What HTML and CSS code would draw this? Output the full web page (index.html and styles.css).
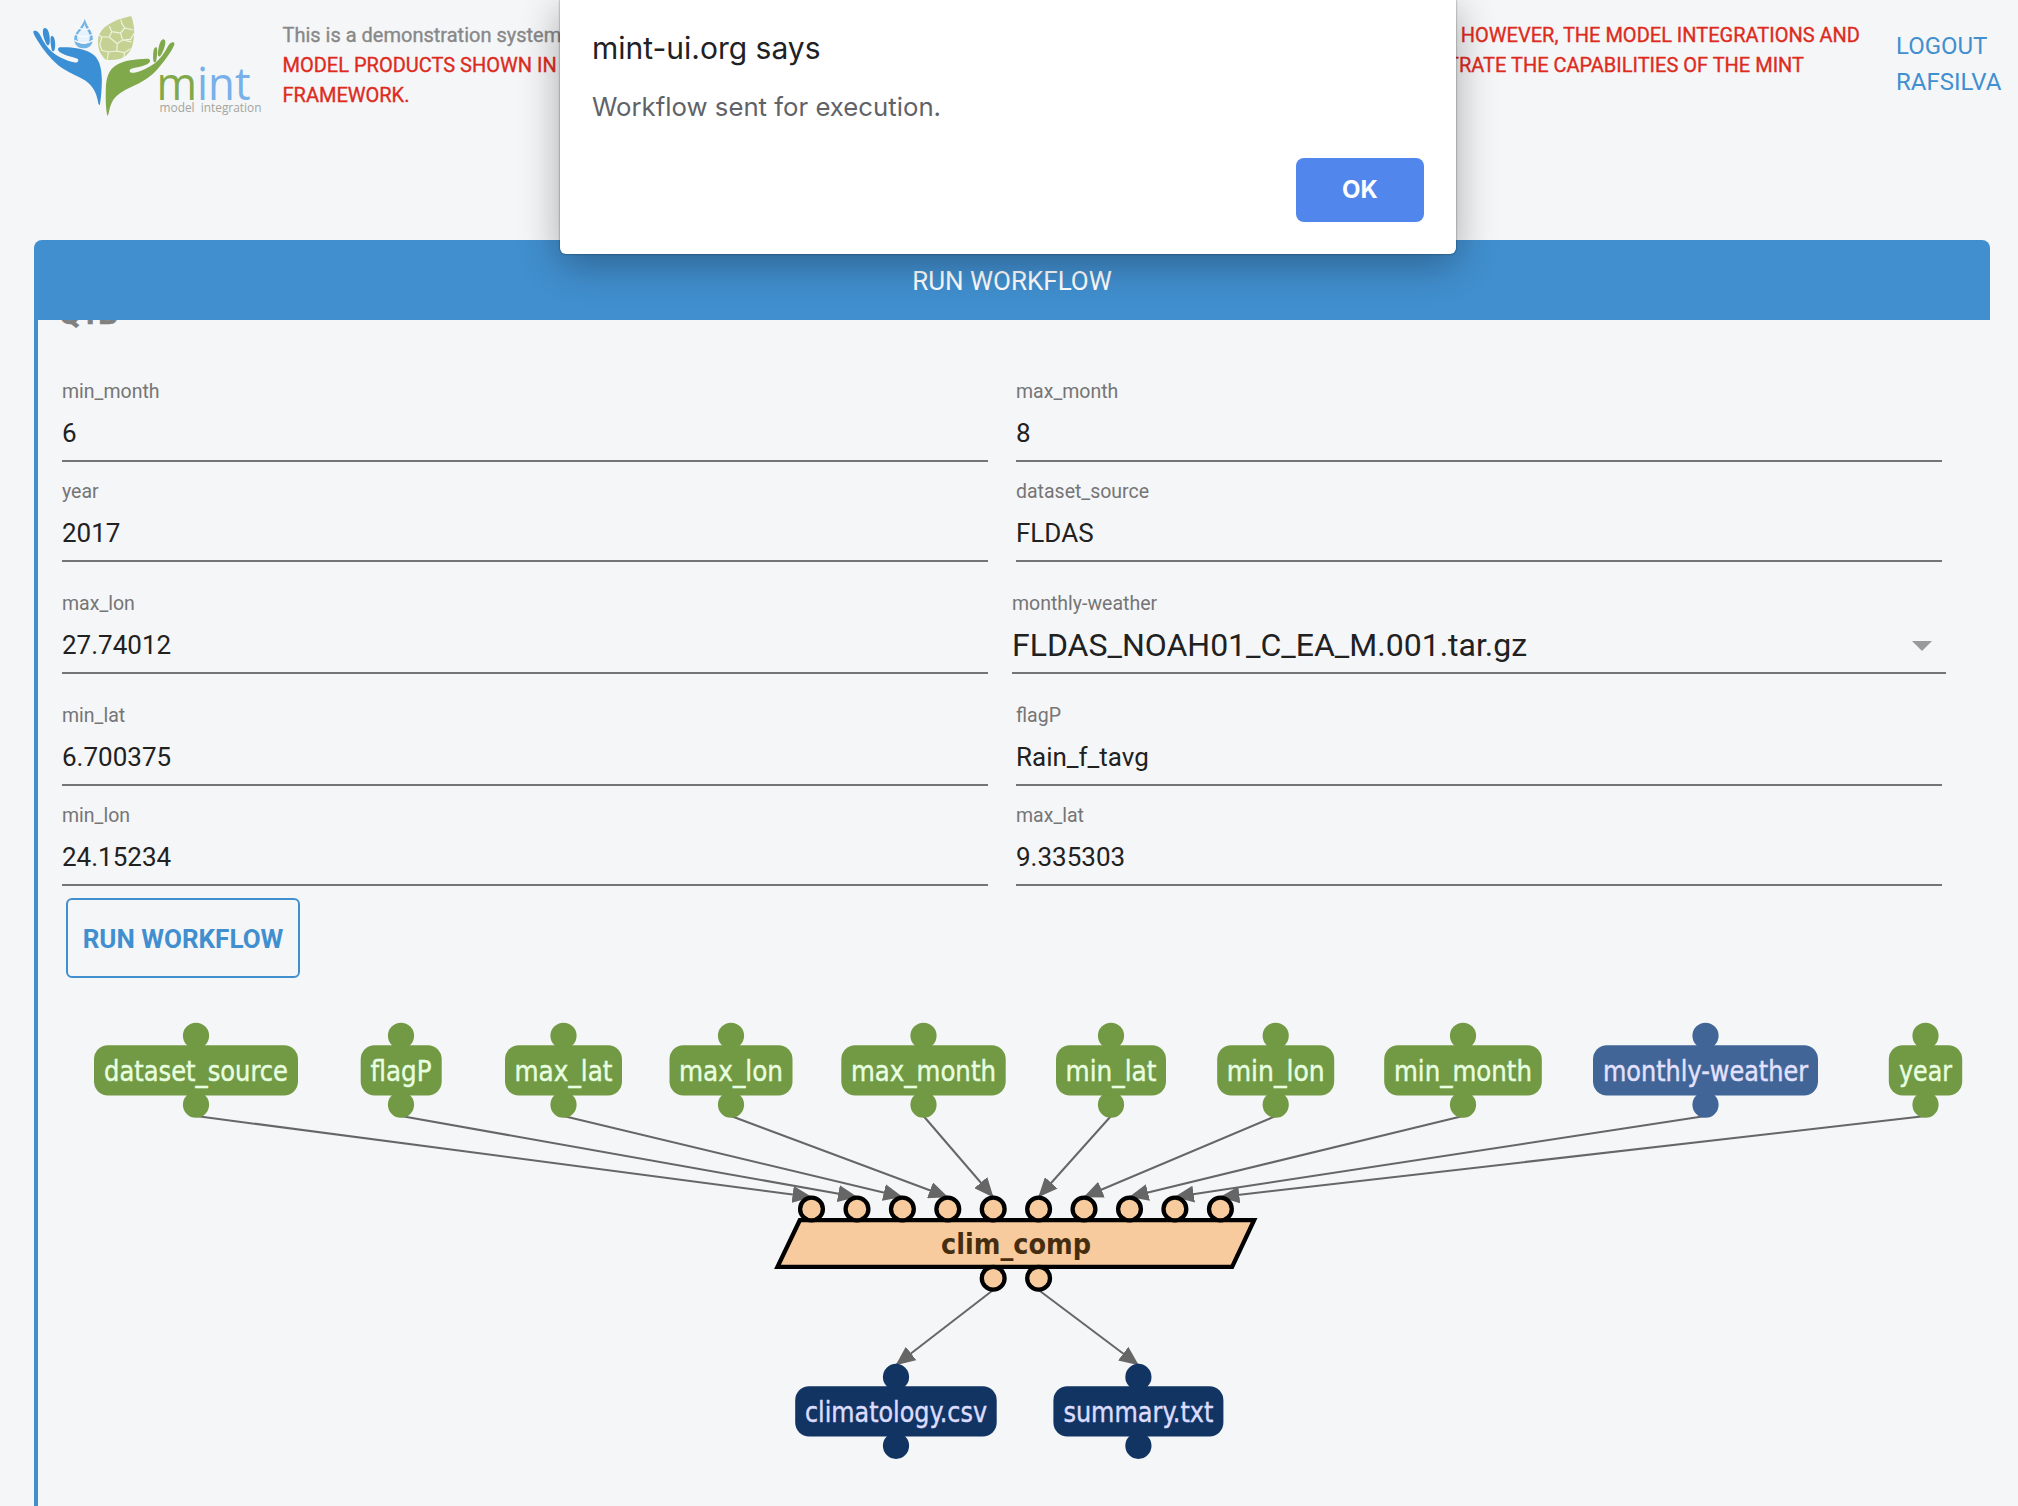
FILE: index.html
```html
<!DOCTYPE html>
<html lang="en">
<head>
<meta charset="utf-8">
<title>MINT</title>
<link rel="stylesheet" href="styles.css">
</head>
<body>
<header class="top">
  <svg class="logo" width="240" height="120" viewBox="0 0 240 120">
    <g transform="translate(2.5 0) scale(.33333)">
      <g fill="#3b8fd4">
        <path d="M9 93C20 89 26 99 30 107C39 127 52 144 66 157C86 173 112 184 130 187C142 190 147 181 141 176C120 170 95 164 85 154C80 146 84 141 92 142C124 141 156 146 180 158C206 172 213 200 214 238C214 270 211 300 208 315C204 316 203 309 201 298C194 263 172 243 145 231C106 214 79 197 56 169C36 146 20 121 11 104Q7 97 9 93Z"/>
        <path d="M41 84C53 82 58 102 58 123C58 132 54 139 50 135C42 125 31 91 41 84Z"/>
        <path d="M62 109C70 105 74 119 74 135C74 150 70 157 65 153C61 145 58 113 62 109Z"/>
      </g>
      <g fill="#80a94c">
        <path d="M430 127C421 124 415 133 411 141C402 160 388 176 375 188C355 203 329 215 311 218C298 220 292 211 303 206C322 201 343 199 355 189C362 182 359 175 348 176C318 177 278 181 258 195C233 210 227 235 226 268C225 300 226 330 231 348C236 342 235 330 241 315C250 289 270 277 296 264C335 246 361 232 384 204C406 178 422 156 431 136Q433 130 430 127Z"/>
        <path d="M400 118C388 118 384 142 382 160C382 170 386 173 391 166C400 152 411 122 400 118Z"/>
        <path d="M378 142C370 138 367 156 368 176C369 190 375 190 377 182C380 168 382 146 378 142Z"/>
      </g>
      <path d="M163 56C169 81 187 92 187 117C187 135 176 145 160 145C143 145 131 134 131 117C131 96 156 82 163 56Z" fill="#74b4e4"/>
      <path d="M162 73C168 91 178 98 178 112C178 125 171 132 160 132C147 132 140 124 140 112C140 98 157 90 162 73Z" fill="#e6f3fc"/>
      <path d="M132 75Q162 102 194 76M133 102Q160 118 188 102M132 121Q160 137 188 121" fill="none" stroke="#f8fafc" stroke-width="4"/>
      <path d="M302 48C312 75 314 100 307 132C301 160 280 179 247 180H227C207 163 200 142 203 113C210 82 245 60 302 48Z" fill="#c3d293"/>
      <path d="M236 78L244 95L236 111L214 111L204 104M244 95L270 99L283 84L274 71L271 58M283 84L308 90M270 99L276 120L304 126M276 120L260 131L236 111M260 131L259 153L282 158L300 146M214 111L208 134L214 151L234 156L259 153M234 156L230 180M282 158L280 174M276 120L300 118L311 100" fill="none" stroke="#eef3df" stroke-width="3.500"/>
    </g>
    <text class="lg-name" x="128.500" y="99.700" textLength="94" lengthAdjust="spacingAndGlyphs"><tspan fill="#80a94c">m</tspan><tspan fill="#78b0ea">int</tspan></text>
    <text class="lg-sub" x="131.500" y="111.800" textLength="102" lengthAdjust="spacingAndGlyphs">model&#160; integration</text>
  </svg>
  <div class="notice">
    <p><span class="intro">This is a demonstration system</span><span>HOWEVER, THE MODEL INTEGRATIONS AND</span></p>
    <p class="second"><span>MODEL PRODUCTS SHOWN IN</span><span>DEMONSTRATE THE CAPABILITIES OF THE MINT</span></p>
    <p>FRAMEWORK.</p>
  </div>
  <nav class="user"><a>LOGOUT</a><a>RAFSILVA</a></nav>
</header>

<main class="panel">
  <h1 class="bar">RUN WORKFLOW</h1>
  <div class="body">
    <div class="clip"><h2>Q1B</h2></div>
    <form class="fields">
      <div class="field"><label>min_month</label><div class="val">6</div></div>
      <div class="field"><label>max_month</label><div class="val">8</div></div>
      <div class="field"><label>year</label><div class="val">2017</div></div>
      <div class="field"><label>dataset_source</label><div class="val">FLDAS</div></div>
      <div class="field tall"><label>max_lon</label><div class="val">27.74012</div></div>
      <div class="field tall select"><label>monthly-weather</label><div class="val"><span>FLDAS_NOAH01_C_EA_M.001.tar.gz</span><i class="caret"></i></div></div>
      <div class="field"><label>min_lat</label><div class="val">6.700375</div></div>
      <div class="field"><label>flagP</label><div class="val">Rain_f_tavg</div></div>
      <div class="field"><label>min_lon</label><div class="val">24.15234</div></div>
      <div class="field"><label>max_lat</label><div class="val">9.335303</div></div>
    </form>
    <button class="run" type="button">RUN WORKFLOW</button>
    <svg class="graph" width="1980" height="528" viewBox="38 978 1980 528">
      <defs>
        <marker id="arrow" markerUnits="userSpaceOnUse" markerWidth="20" markerHeight="17" refX="19" refY="8.500" orient="auto"><path d="M0 0L19.500 8.500L0 17Z" fill="#666"/></marker>
      </defs>
      <g class="edges">
        <path d="M196 1116L811.500 1197"/><path d="M401 1116L857 1197"/><path d="M563.500 1116L902.300 1197"/><path d="M731 1116L947.800 1197"/><path d="M923.500 1116L993.200 1197"/>
        <path d="M1111 1116L1038.600 1197"/><path d="M1275.700 1116L1084 1197"/><path d="M1463 1116L1129.500 1197"/><path d="M1705.500 1116L1174.900 1197"/><path d="M1925.500 1116L1220.400 1197"/>
        <path d="M993.200 1290L896 1365"/><path d="M1038.600 1290L1138.400 1365"/>
      </g>
      <g class="param">
        <circle cx="196" cy="1035.800" r="13.100"/><circle cx="196" cy="1104.700" r="13.100"/><rect x="94" y="1045.200" width="204" height="50.300" rx="14"/><text x="196" y="1080.500" textLength="184" lengthAdjust="spacingAndGlyphs">dataset_source</text>
        <circle cx="401" cy="1035.800" r="13.100"/><circle cx="401" cy="1104.700" r="13.100"/><rect x="360.700" y="1045.200" width="81" height="50.300" rx="14"/><text x="401" y="1080.500" textLength="61" lengthAdjust="spacingAndGlyphs">flagP</text>
        <circle cx="563.500" cy="1035.800" r="13.100"/><circle cx="563.500" cy="1104.700" r="13.100"/><rect x="505" y="1045.200" width="117" height="50.300" rx="14"/><text x="563.500" y="1080.500" textLength="98" lengthAdjust="spacingAndGlyphs">max_lat</text>
        <circle cx="731" cy="1035.800" r="13.100"/><circle cx="731" cy="1104.700" r="13.100"/><rect x="669.500" y="1045.200" width="123" height="50.300" rx="14"/><text x="731" y="1080.500" textLength="104" lengthAdjust="spacingAndGlyphs">max_lon</text>
        <circle cx="923.500" cy="1035.800" r="13.100"/><circle cx="923.500" cy="1104.700" r="13.100"/><rect x="841.300" y="1045.200" width="164.400" height="50.300" rx="14"/><text x="923.500" y="1080.500" textLength="145" lengthAdjust="spacingAndGlyphs">max_month</text>
        <circle cx="1111" cy="1035.800" r="13.100"/><circle cx="1111" cy="1104.700" r="13.100"/><rect x="1056" y="1045.200" width="110" height="50.300" rx="14"/><text x="1111" y="1080.500" textLength="91" lengthAdjust="spacingAndGlyphs">min_lat</text>
        <circle cx="1275.700" cy="1035.800" r="13.100"/><circle cx="1275.700" cy="1104.700" r="13.100"/><rect x="1217.200" y="1045.200" width="117" height="50.300" rx="14"/><text x="1275.700" y="1080.500" textLength="98" lengthAdjust="spacingAndGlyphs">min_lon</text>
        <circle cx="1463" cy="1035.800" r="13.100"/><circle cx="1463" cy="1104.700" r="13.100"/><rect x="1384.200" y="1045.200" width="157.600" height="50.300" rx="14"/><text x="1463" y="1080.500" textLength="138" lengthAdjust="spacingAndGlyphs">min_month</text>
        <circle cx="1925.500" cy="1035.800" r="13.100"/><circle cx="1925.500" cy="1104.700" r="13.100"/><rect x="1888.800" y="1045.200" width="73.400" height="50.300" rx="14"/><text x="1925.500" y="1080.500" textLength="53" lengthAdjust="spacingAndGlyphs">year</text>
      </g>
      <g class="input">
        <circle cx="1705.500" cy="1035.800" r="13.100"/><circle cx="1705.500" cy="1104.700" r="13.100"/><rect x="1593" y="1045.200" width="225" height="50.300" rx="14"/><text x="1705.500" y="1080.500" textLength="205" lengthAdjust="spacingAndGlyphs">monthly-weather</text>
      </g>
      <g class="comp">
        <path d="M799.800 1220.200H1254.100L1232.100 1266.800H777.500Z"/>
        <circle cx="811.500" cy="1209" r="11.400"/><circle cx="857" cy="1209" r="11.400"/><circle cx="902.400" cy="1209" r="11.400"/><circle cx="947.800" cy="1209" r="11.400"/><circle cx="993.200" cy="1209" r="11.400"/><circle cx="1038.600" cy="1209" r="11.400"/><circle cx="1084" cy="1209" r="11.400"/><circle cx="1129.500" cy="1209" r="11.400"/><circle cx="1174.900" cy="1209" r="11.400"/><circle cx="1220.400" cy="1209" r="11.400"/>
        <circle cx="993.200" cy="1278.200" r="11.400"/><circle cx="1038.600" cy="1278.200" r="11.400"/>
        <text x="1016" y="1253.500" textLength="150" lengthAdjust="spacingAndGlyphs">clim_comp</text>
      </g>
      <g class="output">
        <circle cx="896" cy="1376.900" r="13.100"/><circle cx="896" cy="1445.800" r="13.100"/><rect x="795.200" y="1386.200" width="201.500" height="50.300" rx="14"/><text x="896" y="1421.500" textLength="182" lengthAdjust="spacingAndGlyphs">climatology.csv</text>
        <circle cx="1138.400" cy="1376.900" r="13.100"/><circle cx="1138.400" cy="1445.800" r="13.100"/><rect x="1053.400" y="1386.200" width="170" height="50.300" rx="14"/><text x="1138.400" y="1421.500" textLength="150" lengthAdjust="spacingAndGlyphs">summary.txt</text>
      </g>
    </svg>
  </div>
</main>

<div class="dialog" role="alertdialog">
  <div class="title">mint-ui.org says</div>
  <div class="msg">Workflow sent for execution.</div>
  <button class="ok" type="button">OK</button>
</div>
</body>
</html>
```
FILE: styles.css
```css
* { box-sizing: border-box; }
body { margin: 0; width: 2018px; height: 1506px; overflow: hidden; background: #f5f6f8; font-family: Roboto, "Liberation Sans", sans-serif; position: relative; }
h1, h2, p { margin: 0; font-weight: 400; }

.top { display: flex; height: 240px; padding-left: 28px; }
.logo { flex: none; }
.lg-name { font: 400 45px "Open Sans", sans-serif; }
.lg-sub { font: 12.800px "Open Sans", sans-serif; fill: #a3a69d; }
.notice { width: 1577.500px; margin-left: 14.500px; padding-top: 20px; font-size: 20px; line-height: 30px; color: #dd2c1e; white-space: nowrap; -webkit-text-stroke: .35px; }
.notice p { display: flex; justify-content: space-between; }
.notice .second { padding-right: 56px; }
.notice .intro { color: #888; }
.user { display: flex; flex-direction: column; margin-left: 36px; padding-top: 28px; font-size: 24px; line-height: 36px; color: #428fcf; }

.panel { margin: 0 28px 0 34px; }
.bar { height: 80px; border-radius: 8px 8px 0 0; background: #418fcf; color: #fff; font-size: 26px; line-height: 82px; text-align: center; }
.body { height: 1186px; border-left: 4px solid #418fcf; }
.clip { height: 52px; overflow: hidden; }
.clip h2 { margin: -24px 0 0 21px; font-size: 31px; line-height: 36px; font-weight: 700; color: #808080; -webkit-text-stroke: .6px; }
.fields { display: grid; grid-template-columns: 926px 926px; column-gap: 28px; padding-left: 24px; height: 520px; align-content: start; }
.field { height: 100px; padding-top: 5px; }
.field.tall { height: 124px; padding: 17px 0 12px; }
.field label { display: block; font-size: 19.500px; line-height: 30px; color: #757575; }
.field .val { display: flex; align-items: center; height: 55px; padding-bottom: 2px; border-bottom: 2px solid #747577; font-size: 26px; color: #212121; }
.select { margin: 0 -4px; }
.select .val { justify-content: space-between; font-size: 32px; padding-right: 14px; }
.caret { margin-top: 2px; border: 10px solid transparent; border-top-color: #9a9a9b; border-bottom: 0; }
.run { display: block; width: 234px; height: 80px; margin: 6px 0 0 28px; border: 2px solid #418fcf; border-radius: 6px; background: none; color: #418fcf; font: 700 26px Roboto, sans-serif; padding: 2px 0 0; white-space: nowrap; }

.graph { display: block; }
.graph text { font: 28px "DejaVu Sans Condensed", "DejaVu Sans", sans-serif; font-stretch: condensed; text-anchor: middle; }
.edges path { stroke: #666; stroke-width: 2; fill: none; marker-end: url(#arrow); }
.param { fill: #729943; }
.param text { fill: #e8ffe0; stroke: #e8ffe0; stroke-width: .4px; }
.input { fill: #416596; }
.input text { fill: #e3e1ff; stroke: #e3e1ff; stroke-width: .4px; }
.output { fill: #123463; }
.output text { fill: #dcdcff; stroke: #dcdcff; stroke-width: .4px; }
.comp { fill: #f7cb9d; stroke: #000; stroke-width: 4.300px; }
.comp text { fill: #462d0f; stroke: none; font-weight: 700; }

.dialog { position: absolute; left: 560px; top: 0; width: 896px; height: 254px; padding: 28px 32px 0 32px; background: #fff; border-radius: 0 0 6px 6px; box-shadow: 0 0 2px rgba(0,0,0,.6), 0 10px 40px rgba(0,0,0,.32); display: flex; flex-direction: column; font-family: Inter, sans-serif; }
.title { font-size: 30px; line-height: 40px; color: #202124; }
.msg { margin-top: 19px; font-size: 25.750px; line-height: 40px; color: #5f6368; }
.ok { align-self: flex-end; margin-top: 31px; width: 128px; height: 64px; border: 0; border-radius: 8px; background: #5186ec; color: #fff; font: 700 24px Inter, sans-serif; padding: 0 0 2px; }
```
